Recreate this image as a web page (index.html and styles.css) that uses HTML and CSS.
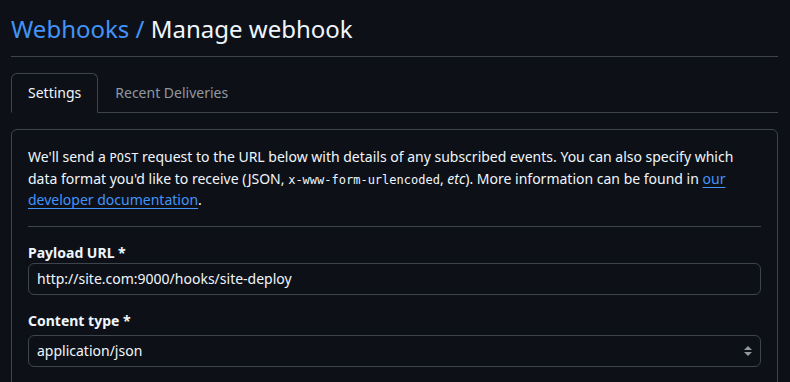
FILE: index.html
```html
<!DOCTYPE html>
<html lang="en">
<head>
<meta charset="utf-8">
<title>Manage webhook</title>
<link rel="stylesheet" href="styles.css">
</head>
<body>
<div class="page">
  <div class="subhead">
    <h2 class="subhead-title"><a class="crumb" href="#">Webhooks</a><span class="crumb-sep"> / </span>Manage webhook</h2>
  </div>
  <nav class="tabnav">
    <a class="tab tab-selected" href="#">Settings</a>
    <a class="tab" href="#">Recent Deliveries</a>
  </nav>
  <div class="box">
    <p class="intro">We'll send a <code>POST</code> request to the URL below with details of any subscribed events. You can also specify which data format you'd like to receive (JSON, <code>x-www-form-urlencoded</code>, <em>etc</em>). More information can be found in <a class="link" href="#">our developer documentation</a>.</p>
    <hr class="divider">
    <div class="form-group first">
      <label class="label">Payload URL *</label>
      <div class="input">http://site.com:9000/hooks/site-deploy</div>
    </div>
    <div class="form-group">
      <label class="label label-select">Content type *</label>
      <div class="select">
        <span>application/json</span>
        <svg class="select-caret" width="12" height="14" viewBox="0 0 12 14"><path d="M6 2 10 6H2z M6 12 2 8h8z" fill="#9198a1"/></svg>
      </div>
    </div>
  </div>
</div>
</body>
</html>
```
FILE: styles.css
```css
* { box-sizing: border-box; }
html, body { margin: 0; padding: 0; background: #0d1117; }
body {
  font-family: "Noto Sans", "DejaVu Sans", sans-serif;
  font-size: 14px;
  line-height: 21px;
  color: #f0f6fc;
}
.page { padding: 11px 12px 0 11px; }
.subhead {
  border-bottom: 1px solid #3d444d;
  padding-bottom: 9px;
  margin-bottom: 16px;
}
.subhead-title {
  margin: 0;
  font-size: 24px;
  line-height: 36px;
  font-weight: 400;
  color: #f0f6fc;
}
.crumb, .crumb-sep { color: #4493f8; text-decoration: none; }
.tabnav {
  display: flex;
  border-bottom: 1px solid #3d444d;
  margin-bottom: 16px;
}
.tab {
  padding: 8px 16px 9px;
  margin-bottom: -1px;
  border: 1px solid transparent;
  border-radius: 6px 6px 0 0;
  color: #9198a1;
  text-decoration: none;
  line-height: 21px;
}
.tab-selected {
  color: #f0f6fc;
  border-color: #3d444d;
  border-bottom-color: #0d1117;
  background: #0d1117;
}
.box {
  border: 1px solid #3d444d;
  border-radius: 6px;
  padding: 16px;
  min-height: 260px;
}
.intro { margin: 0 0 15px; line-height: 21.5px; }
code {
  font-family: "DejaVu Sans Mono", "Liberation Mono", monospace;
  font-size: 12px;
  line-height: 1;
}
.link { color: #4493f8; text-decoration: underline; text-underline-offset: 3px; }
.divider {
  border: 0;
  border-top: 1px solid #3d444d;
  margin: 0 0 15px;
  height: 0;
}
.form-group { margin-bottom: 15px; }
.label { display: block; font-weight: 700; line-height: 21px; }
.label-select { margin-bottom: 4px; }
.input, .select {
  height: 32px;
  border: 1px solid #3d444d;
  border-radius: 6px;
  padding: 5px 8px;
  line-height: 20px;
  background: #0d1117;
  color: #f0f6fc;
}
.select {
  display: flex;
  align-items: center;
  justify-content: space-between;
  padding-right: 6px;
}
.select-caret { display: block; }
```
